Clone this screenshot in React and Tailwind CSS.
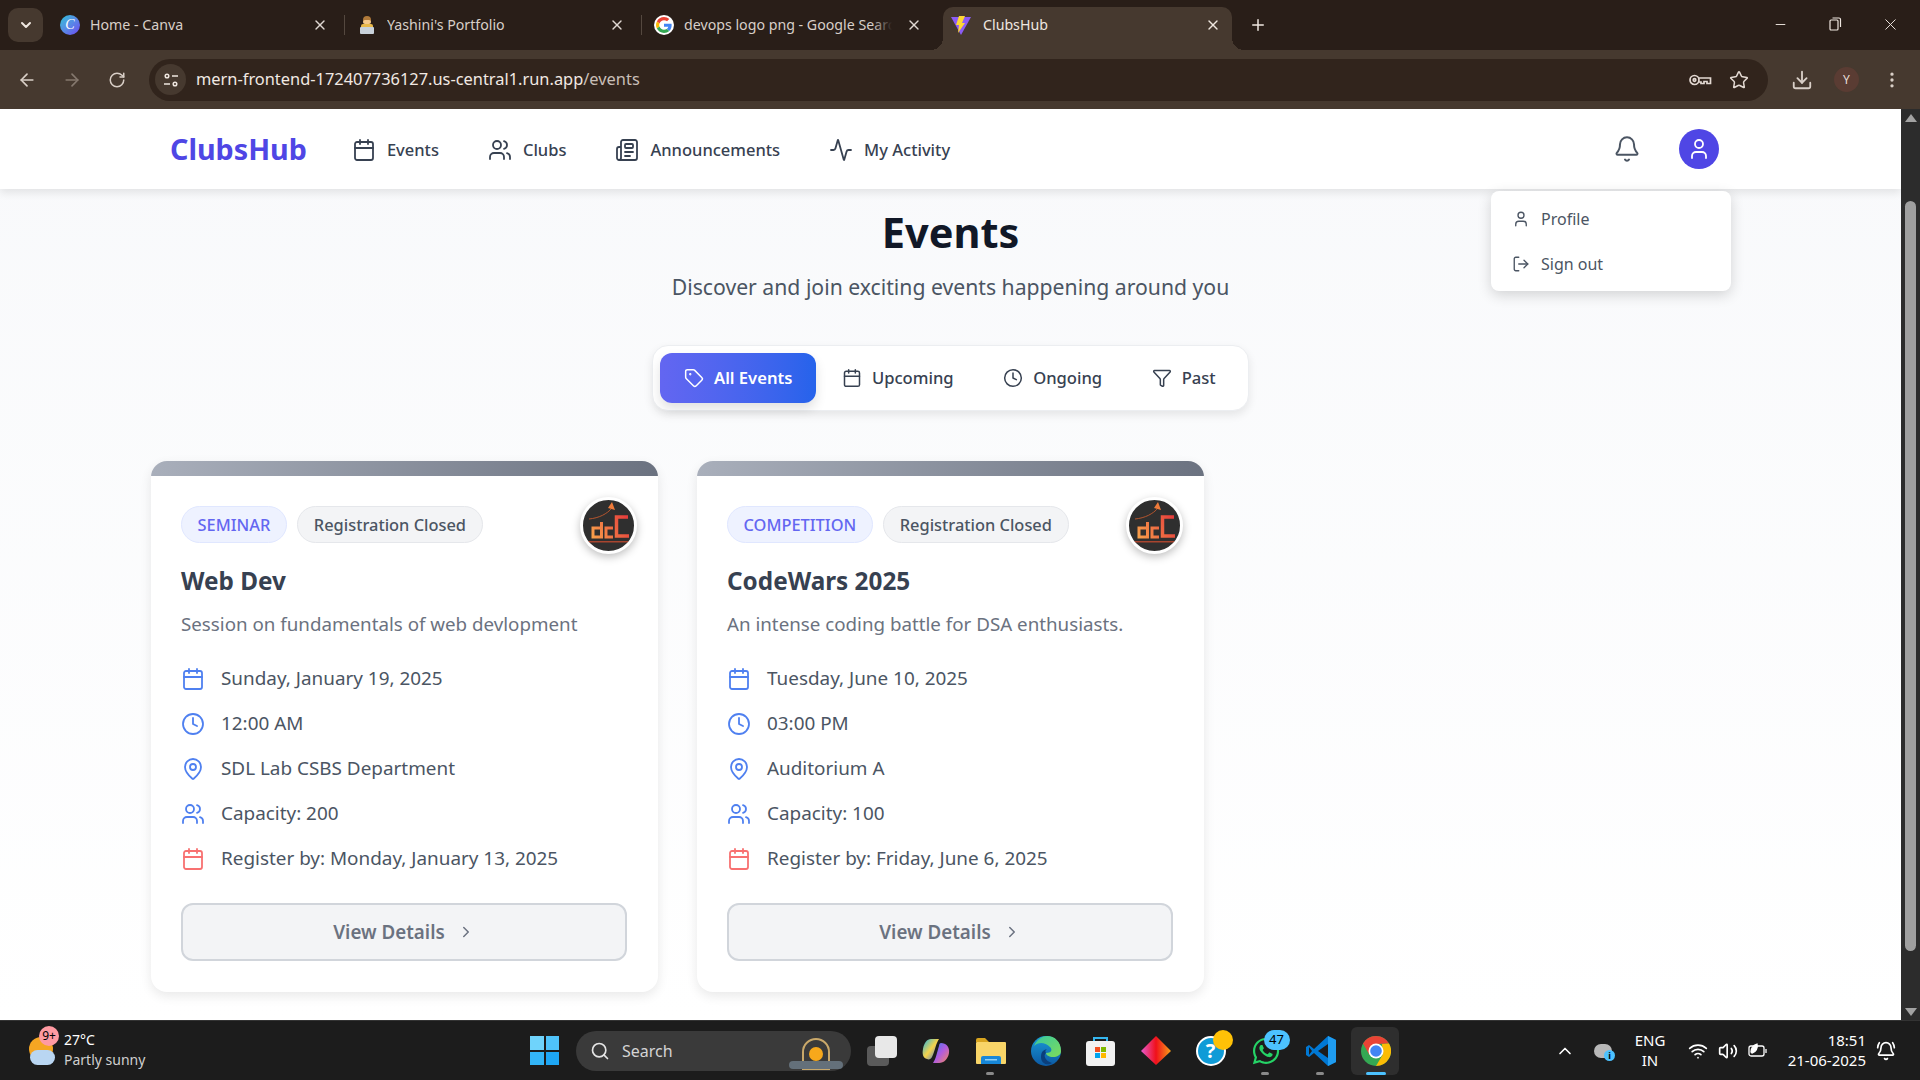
import React from "react";
import { Calendar, Users, Newspaper, Activity, Bell, User, LogOut, Tag, Clock, Filter, MapPin, ChevronRight, ArrowLeft, ArrowRight, RotateCw, Star, Download, MoreVertical, X, Plus, Minus, ChevronDown, ChevronUp, Search, Wifi, Volume2, BellRing } from "lucide-react";
import { FaWhatsapp } from "react-icons/fa";

function CanvaIcon() {
  return (
    <div className="w-5 h-5 rounded-full bg-gradient-to-br from-[#19c3d6] to-[#6a3df0] flex items-center justify-center text-white text-[14px] italic leading-none [font-family:'Liberation_Serif',serif]">C</div>
  );
}
function PersonIcon() {
  return (
    <svg width="20" height="20" viewBox="0 0 20 20">
      <circle cx="10" cy="5" r="4" fill="#b07a3a" />
      <rect x="6" y="5" width="8" height="4" rx="2" fill="#f5c98a" />
      <rect x="4" y="9" width="12" height="9" rx="2" fill="#e9b949" />
      <rect x="3" y="12" width="14" height="7" rx="1" fill="#c9d2da" />
    </svg>
  );
}
function GoogleIcon() {
  return (
    <div className="w-5 h-5 rounded-full bg-white flex items-center justify-center">
      <svg width="16" height="16" viewBox="0 0 48 48">
        <path fill="#EA4335" d="M24 9.5c3.5 0 6.7 1.3 9.1 3.5l6.8-6.8C35.8 2.4 30.3 0 24 0 14.6 0 6.5 5.4 2.6 13.2l7.9 6.1C12.4 13.7 17.7 9.5 24 9.5z" />
        <path fill="#4285F4" d="M46.9 24.5c0-1.6-.1-3.1-.4-4.5H24v9h12.9c-.6 3-2.2 5.500-4.800 7.200l7.700 6c4.500-4.200 7.100-10.300 7.100-17.700z" />
        <path fill="#FBBC05" d="M10.500 28.700c-.5-1.500-.8-3-.8-4.700s.3-3.200.8-4.700l-7.900-6.100C.9 16.500 0 20.100 0 24s.9 7.500 2.600 10.800l7.900-6.100z" />
        <path fill="#34A853" d="M24 48c6.500 0 11.900-2.100 15.800-5.800l-7.700-6c-2.100 1.400-4.900 2.300-8.100 2.300-6.300 0-11.600-4.200-13.500-9.800l-7.900 6.100C6.500 42.600 14.600 48 24 48z" />
      </svg>
    </div>
  );
}
function ViteIcon() {
  return (
    <svg width="20" height="20" viewBox="0 0 20 20">
      <path d="M0 2 L20 2 L10 20 Z" fill="#8b5cf6" />
      <path d="M8 1 L14 1 L11 8 L14 8 L7 18 L8 10 L5 10 Z" fill="#fdd835" />
    </svg>
  );
}

function Tab({ icon, title, sep, fade }) {
  return (
    <div className="w-[297px] h-[43px] pl-3 pb-[7px] flex items-center shrink-0">
      <div className="w-5 h-5 mr-[10px] shrink-0">{icon}</div>
      <div className="w-[214px] relative overflow-hidden whitespace-nowrap text-[14.2px] text-[#d8cfc8] leading-[22px]">
        {fade ? <span className="block w-[208px] overflow-hidden leading-[22px]">{title}</span> : title}
        {fade && <div className="absolute right-[6px] top-0 bottom-0 w-5 bg-gradient-to-r from-transparent to-[#291e18]" />}
      </div>
      <X size={16} className="ml-2 text-[#e0d8d2] shrink-0" />
      {sep && <div className="ml-auto w-px h-5 bg-[#54483f]" />}
    </div>
  );
}

function ActiveTab() {
  return (
    <div className="w-[297px] h-[43px] flex shrink-0 px-1">
      <div className="relative w-full h-full bg-[#46392f] rounded-t-[10px] pl-2 pb-[7px] flex items-center">
        <div className="w-5 h-5 mr-[12px] shrink-0"><ViteIcon /></div>
        <div className="w-[222px] text-[14.2px] text-[#efe7e0] leading-[22px]">ClubsHub</div>
        <X size={16} className="text-[#efe7e0] shrink-0" />
        <div className="absolute bottom-0 -right-3 w-3 h-3 bg-[radial-gradient(circle_at_100%_0,transparent_12px,#46392f_12px)]" />
        <div className="absolute bottom-0 -left-3 w-3 h-3 bg-[radial-gradient(circle_at_0_0,transparent_12px,#46392f_12px)]" />
      </div>
    </div>
  );
}

function TabStrip() {
  return (
    <div className="h-[50px] bg-[#291e18] flex items-end shrink-0 relative">
      <div className="absolute left-[8px] top-2 w-[35px] h-[34px] rounded-[10px] bg-[#46392f] flex items-center justify-center">
        <ChevronDown size={16} strokeWidth={3} className="text-[#efe7e0]" />
      </div>
      <div className="ml-[48px] flex">
        <Tab icon={<CanvaIcon />} title="Home - Canva" sep />
        <Tab icon={<PersonIcon />} title="Yashini's Portfolio" sep />
        <Tab icon={<GoogleIcon />} title="devops logo png - Google Search" fade />
        <ActiveTab />
      </div>
      <div className="ml-[13px] h-[43px] pb-[7px] flex items-center">
        <Plus size={18} className="text-[#efe7e0]" />
      </div>
      <div className="ml-auto h-full flex items-center pr-[20px] pb-[2px]">
        <Minus size={15} strokeWidth={1.5} className="text-[#efe7e0]" />
        <svg width="14" height="16" viewBox="0 0 14 16" className="ml-[40px] text-[#efe7e0]" fill="none" stroke="currentColor" strokeWidth="1.2">
          <rect x="2" y="4" width="8" height="10" rx="1" />
          <path d="M4.500 2 H11 a1.500 1.500 0 0 1 1.500 1.500 V11" />
        </svg>
        <X size={19} strokeWidth={1.2} className="ml-[39px] text-[#efe7e0]" />
      </div>
    </div>
  );
}

function Toolbar() {
  return (
    <div className="h-[59px] bg-[#46392f] flex items-center pl-[17px] shrink-0">
      <ArrowLeft size={20} className="text-[#d9cfc7]" />
      <ArrowRight size={20} className="ml-[25px] text-[#85786e]" />
      <RotateCw size={18} className="ml-[26px] text-[#d9cfc7]" />
      <div className="ml-[23px] w-[1619px] h-[42px] rounded-full bg-[#31241c] flex items-center pl-[6px] pr-[19px]">
        <div className="w-[31px] h-[31px] rounded-full bg-[#46392f] flex items-center justify-center">
          <svg width="16" height="16" viewBox="0 0 16 16" fill="none" stroke="#efe7e0" strokeWidth="1.500">
            <circle cx="4" cy="4" r="1.800" /><path d="M9 4 H15" />
            <circle cx="12" cy="12" r="1.800" /><path d="M1 12 H7" />
          </svg>
        </div>
        <div className="ml-[10px] text-[16.4px] leading-none whitespace-nowrap text-[#f1e9e3]">
          mern-frontend-172407736127.us-central1.run.app<span className="text-[#c9bfb7]">/events</span>
        </div>
        <svg width="24" height="16" viewBox="0 0 24 16" className="ml-auto" fill="none" stroke="#e3d9d2" strokeWidth="1.700">
          <circle cx="6.500" cy="8" r="4.500" /><circle cx="6.500" cy="8" r="1.300" /><path d="M11 6 H22.500 V11.500 H19 V9.500 H16 V11.500 H13 V10 H11" />
        </svg>
        <Star size={20} strokeWidth={1.800} className="ml-[17px] text-[#e3d9d2]" />
      </div>
      <Download size={22} className="ml-[23px] text-[#d9cfc7]" />
      <div className="ml-[21px] w-[25px] h-[25px] rounded-full bg-[#5a3c33] flex items-center justify-center text-[12px] text-[#e8ded8]">Y</div>
      <MoreVertical size={20} className="ml-[23px] text-[#d9cfc7]" />
    </div>
  );
}

function NavItem({ Icon, label }) {
  return (
    <div className="flex items-center gap-[11px] text-[#374151]">
      <Icon size={24} strokeWidth={1.800} />
      <span className="text-[16.5px] font-medium leading-none mt-[2px]">{label}</span>
    </div>
  );
}

function Navbar() {
  return (
    <div className="relative z-10 h-[80px] bg-white shadow-[0_4px_8px_rgba(0,0,0,0.09)] flex items-center pl-[170px] pr-[182px]">
      <div className="text-[28.7px] font-bold text-[#4f46e5] leading-none mt-[1px]">ClubsHub</div>
      <div className="ml-[45px] mt-[1px] flex items-center gap-[49px]">
        <NavItem Icon={Calendar} label="Events" />
        <NavItem Icon={Users} label="Clubs" />
        <NavItem Icon={Newspaper} label="Announcements" />
        <NavItem Icon={Activity} label="My Activity" />
      </div>
      <div className="ml-auto flex items-center gap-[38px]">
        <Bell size={28} strokeWidth={1.700} className="text-[#4b5563]" />
        <div className="w-10 h-10 rounded-full bg-[#4f46e5] flex items-center justify-center">
          <User size={24} strokeWidth={1.800} className="text-white" />
        </div>
      </div>
    </div>
  );
}

function Dropdown() {
  return (
    <div className="absolute z-20 left-[1491px] top-[82px] w-[240px] h-[100px] bg-white rounded-lg shadow-[0_4px_14px_rgba(0,0,0,0.16)] flex flex-col py-[5px] text-[#4b5563]">
      <div className="flex-1 flex items-center pl-[21px] gap-[11px]">
        <User size={18} strokeWidth={1.800} />
        <span className="text-[16px] leading-none">Profile</span>
      </div>
      <div className="flex-1 flex items-center pl-[21px] gap-[11px]">
        <LogOut size={18} strokeWidth={1.800} />
        <span className="text-[16px] leading-none">Sign out</span>
      </div>
    </div>
  );
}

function FilterTab({ Icon, label, active }) {
  return (
    <div className={(active ? "bg-gradient-to-r from-[#6366f1] to-[#2563eb] text-white shadow-[0_6px_12px_rgba(0,0,0,0.12)] font-semibold " : "text-[#374151] font-medium ") + "h-[50px] px-6 rounded-xl flex items-center gap-[10px]"}>
      <Icon size={20} strokeWidth={1.800} />
      <span className="text-[16.6px] leading-none">{label}</span>
    </div>
  );
}

function ClubLogo({ id }) {
  return (
    <div className="absolute right-[21px] top-[36px] w-[57px] h-[57px] rounded-full border-[3px] border-white shadow-[0_3px_8px_rgba(0,0,0,0.25)] bg-[#2f2f2f] overflow-hidden">
      <svg width="51" height="51" viewBox="0 0 51 51" fill="none">
        <defs>
          <linearGradient id={id} gradientUnits="userSpaceOnUse" x1="8" y1="36" x2="46" y2="16">
            <stop offset="0" stopColor="#f8a14a" />
            <stop offset="1" stopColor="#e5383b" />
          </linearGradient>
        </defs>
        <path d="M6 19 C16 18 24 14 29 8" stroke="#b4552e" strokeWidth="1" />
        <path d="M25 8 L29 2 L32 10 Z" fill="#ef7b3a" />
        <path d="M18.500 22 V37 H10 V28 H18" stroke={`url(#${id})`} strokeWidth="3" />
        <path d="M30 28 H23 V37 H30" stroke={`url(#${id})`} strokeWidth="3" />
        <path d="M45 17 H33.500 V36 H46" stroke={`url(#${id})`} strokeWidth="3.500" />
        <rect x="3" y="41" width="45" height="1.500" fill="#a8452f" />
      </svg>
    </div>
  );
}

function Row({ Icon, text, red }) {
  return (
    <div className="h-[45px] flex items-center gap-[16px]">
      <Icon size={24} strokeWidth={1.800} className={red ? "text-[#f87171] shrink-0" : "text-[#4f80f0] shrink-0"} />
      <span className="text-[18.9px] text-[#4b5563] leading-none">{text}</span>
    </div>
  );
}

function EventCard({ id, kind, title, desc, date, time, place, capacity, deadline }) {
  return (
    <div className="relative w-[507px] h-[531px] bg-white rounded-2xl overflow-hidden shadow-[0_4px_12px_rgba(0,0,0,0.09)] shrink-0">
      <div className="h-[15px] bg-gradient-to-r from-[#a9afbb] to-[#6b7280]" />
      <ClubLogo id={id} />
      <div className="px-[30px] pt-[30px]">
        <div className="flex gap-[10px]">
          <div className="h-[37px] px-[15.5px] rounded-full bg-[#eef2ff] border border-[#e0e7ff] flex items-center text-[16.4px] font-medium text-[#6366f1] leading-none pt-[2px]">{kind}</div>
          <div className="h-[37px] px-[16px] rounded-full bg-[#f3f4f6] border border-[#e5e7eb] flex items-center text-[16.4px] font-medium text-[#4b5563] leading-none pt-[2px]">Registration Closed</div>
        </div>
        <div className="mt-[22px] text-[24.3px] font-bold text-[#374151] leading-[32px]">{title}</div>
        <div className="mt-[13px] text-[18.75px] text-[#6b7280] leading-[28px]">{desc}</div>
        <div className="mt-[18px]">
          <Row Icon={Calendar} text={date} />
          <Row Icon={Clock} text={time} />
          <Row Icon={MapPin} text={place} />
          <Row Icon={Users} text={capacity} />
          <Row Icon={Calendar} text={deadline} red />
        </div>
        <div className="mt-[22px] w-[446px] h-[58px] rounded-xl border-2 border-[#d1d5db] bg-[#f3f4f6] flex items-center justify-center gap-[12px] text-[#6b7280]">
          <span className="text-[18.8px] font-semibold leading-none">View Details</span>
          <ChevronRight size={18} />
        </div>
      </div>
    </div>
  );
}

function Page() {
  return (
    <div className="relative flex-1 min-w-0 overflow-hidden bg-gradient-to-b from-[#f8f9fb] to-white">
      <Navbar />
      <Dropdown />
      <div className="flex flex-col items-center pt-[15px]">
        <h1 className="text-[41.5px] font-bold text-[#111827] leading-[56px]">Events</h1>
        <p className="mt-[13px] text-[21.2px] text-[#4b5563] leading-[28px]">Discover and join exciting events happening around you</p>
        <div className="mt-[44px] w-[597px] h-[66px] bg-white rounded-2xl border border-[#eceef1] shadow-[0_4px_10px_rgba(0,0,0,0.09)] flex items-center pl-[7px] gap-[1.5px]">
          <FilterTab Icon={Tag} label="All Events" active />
          <FilterTab Icon={Calendar} label="Upcoming" />
          <FilterTab Icon={Clock} label="Ongoing" />
          <FilterTab Icon={Filter} label="Past" />
        </div>
      </div>
      <div className="mt-[50px] ml-[151px] flex gap-[39px]">
        <EventCard id="logo-a" kind="SEMINAR" title="Web Dev" desc="Session on fundamentals of web devlopment" date="Sunday, January 19, 2025" time="12:00 AM" place="SDL Lab CSBS Department" capacity="Capacity: 200" deadline="Register by: Monday, January 13, 2025" />
        <EventCard id="logo-b" kind="COMPETITION" title="CodeWars 2025" desc="An intense coding battle for DSA enthusiasts." date="Tuesday, June 10, 2025" time="03:00 PM" place="Auditorium A" capacity="Capacity: 100" deadline="Register by: Friday, June 6, 2025" />
      </div>
    </div>
  );
}

function Scrollbar() {
  return (
    <div className="w-[19px] shrink-0 bg-[#2c2c2c] flex flex-col items-center pt-[5px] pb-[4px]">
      <div className="w-0 h-0 border-l-[6px] border-r-[6px] border-b-[8px] border-l-transparent border-r-transparent border-b-[#a3a3a3]" />
      <div className="mt-[79px] w-[11px] h-[750px] rounded-full bg-[#9f9f9f]" />
      <div className="mt-auto w-0 h-0 border-l-[6px] border-r-[6px] border-t-[8px] border-l-transparent border-r-transparent border-t-[#a3a3a3]" />
    </div>
  );
}

function WindowsLogo() {
  return (
    <div className="grid grid-cols-2 gap-[2px] w-[29px] h-[29px] shrink-0">
      <div className="bg-[#6fd3fb]" />
      <div className="bg-[#4fc3fa]" />
      <div className="bg-[#33b5f7]" />
      <div className="bg-[#1ea7f5]" />
    </div>
  );
}

const Copilot = () => (
  <svg width="28" height="28" viewBox="0 0 28 28">
    <defs>
      <linearGradient id="c1" x1="0" y1="0" x2="1" y2="1"><stop offset="0" stopColor="#1fb6e8" /><stop offset="0.500" stopColor="#f6d34a" /><stop offset="1" stopColor="#2f6fe8" /></linearGradient>
      <linearGradient id="c2" x1="0" y1="0" x2="1" y2="1"><stop offset="0" stopColor="#3a7cf0" /><stop offset="0.500" stopColor="#b05be0" /><stop offset="1" stopColor="#f58a5a" /></linearGradient>
    </defs>
    <path d="M9 2 H17 C14 6 13 14 10 20 C9 22 7 23 5 22 C1 21 0 17 1 12 C2 6 5 2 9 2 Z" fill="url(#c1)" />
    <path d="M19 6 C24 6 28 10 27 16 C26 22 22 26 17 26 H11 C14 22 15 15 17 9 C17 7 18 6 19 6 Z" fill="url(#c2)" />
  </svg>
);
const Folder = () => (
  <svg width="30" height="28" viewBox="0 0 30 28">
    <path d="M0 3 a2 2 0 0 1 2-2 H9 l4 4 H0 Z" fill="#d9a51f" />
    <rect x="0" y="5" width="30" height="22" rx="1" fill="#f8d568" />
    <path d="M5 27 V21 a2 2 0 0 1 2-2 H23 a2 2 0 0 1 2 2 V27 Z" fill="#1787d8" />
    <rect x="9" y="22" width="12" height="1.500" fill="#8fd0f5" />
  </svg>
);
const Edge = () => (
  <svg width="30" height="30" viewBox="0 0 30 30">
    <defs>
      <linearGradient id="e1" x1="0" y1="0" x2="1" y2="1"><stop offset="0" stopColor="#36c9a0" /><stop offset="1" stopColor="#7fdc5a" /></linearGradient>
      <linearGradient id="e2" x1="0" y1="0" x2="0" y2="1"><stop offset="0" stopColor="#1a9ad6" /><stop offset="1" stopColor="#0c59a4" /></linearGradient>
    </defs>
    <circle cx="15" cy="15" r="15" fill="url(#e2)" />
    <path d="M3 10 C6 3 12 0 16 0 C24 0 30 6 30 15 C30 19 26 21 22 21 C18 21 15 19 15 17 C20 17 22 14 19 11 C14 6 7 6 3 10 Z" fill="url(#e1)" />
    <path d="M15 17 C12 19 14 25 21 27 C17 30 10 28 10 21 C10 16 12 14 16 13 C14 14 14 16 15 17 Z" fill="#0b3f7c" />
  </svg>
);
const Store = () => (
  <svg width="29" height="30" viewBox="0 0 29 30">
    <path d="M8 6 V2 H21 V6" fill="none" stroke="#35b6ef" strokeWidth="2" />
    <rect x="0" y="5" width="29" height="25" rx="3" fill="#f2f2f2" />
    <rect x="9" y="11" width="5" height="5" fill="#f25022" />
    <rect x="15" y="11" width="5" height="5" fill="#7fba00" />
    <rect x="9" y="17" width="5" height="5" fill="#00a4ef" />
    <rect x="15" y="17" width="5" height="5" fill="#ffb900" />
  </svg>
);
const Diamond = () => (
  <svg width="30" height="30" viewBox="0 0 30 30">
    <defs>
      <linearGradient id="d1" x1="0" y1="0" x2="1" y2="0"><stop offset="0" stopColor="#e65bd0" /><stop offset="0.500" stopColor="#f0101a" /><stop offset="1" stopColor="#f9a01a" /></linearGradient>
    </defs>
    <path d="M15 0 L30 15 L15 29 L0 15 Z" fill="url(#d1)" />
  </svg>
);
const Help = () => (
  <div className="relative w-[30px] h-[30px]">
    <div className="w-[30px] h-[30px] rounded-full bg-[#0f9bd7] border-2 border-white flex items-center justify-center text-white text-[20px] font-bold leading-none">?</div>
    <div className="absolute -top-[6px] -right-[7px] w-5 h-5 rounded-full bg-[#ffc107]" />
  </div>
);
const Whatsapp = () => (
  <div className="relative w-[30px] h-[30px]">
    <FaWhatsapp size={30} className="text-[#25d366]" />
    <div className="absolute -top-[6px] -right-[9px] w-[26px] h-5 rounded-full bg-[#4cc2ff] flex items-center justify-center text-[13px] text-black leading-none">47</div>
  </div>
);
const VSCode = () => (
  <svg width="30" height="30" viewBox="0 0 30 30">
    <path d="M22 0 L30 4 V26 L22 30 L8 17 L3 21 L0 19 V11 L3 9 L8 13 Z" fill="#0078d4" />
    <path d="M22 0 L30 4 V26 L22 30 Z" fill="#1f9cf0" />
    <path d="M22 8 L12 15 L22 22 Z" fill="#1c1c1c" />
    <path d="M3 11 L6 15 L3 19 Z" fill="#1c1c1c" />
  </svg>
);
const Chrome = () => (
  <svg width="30" height="30" viewBox="0 0 30 30">
    <circle cx="15" cy="15" r="15" fill="#34a853" />
    <path d="M15 0 A15 15 0 0 1 28 7.500 L15 8 L8.500 19 L2 7.500 A15 15 0 0 1 15 0 Z" fill="#ea4335" />
    <path d="M28 7.500 A15 15 0 0 1 15 30 L21.500 19 L21 8 Z" fill="#fbbc05" />
    <circle cx="15" cy="15" r="7.500" fill="#fff" />
    <circle cx="15" cy="15" r="5.800" fill="#4285f4" />
  </svg>
);

function Slot({ children, dot, active }) {
  return (
    <div className="relative w-[55px] h-[48px] flex items-center justify-center shrink-0">
      {active && <div className="absolute left-[3px] right-[4px] top-0 bottom-0 rounded-md bg-[#2e2e2e]" />}
      <div className="relative">{children}</div>
      {dot && <div className="absolute bottom-0 left-[23px] w-2 h-[3px] rounded-full bg-[#8a8a8a]" />}
      {active && <div className="absolute bottom-0 left-[18px] w-5 h-[3px] rounded-full bg-[#4cc2ff]" />}
    </div>
  );
}

function Taskbar() {
  return (
    <div className="h-[60px] shrink-0 bg-[#1c1c1c] border-t border-[#333333] flex items-center text-white">
      <div className="w-[530px] pl-[29px] flex items-center shrink-0">
        <div className="relative w-[26px] h-[28px]">
          <div className="absolute left-0 top-0 w-[24px] h-[24px] rounded-full bg-[#f5a623]" />
          <div className="absolute left-[1px] bottom-0 w-[25px] h-[15px] rounded-full bg-[#b9d6f2]" />
          <div className="absolute -top-[11px] left-[10px] w-[20px] h-[20px] rounded-full bg-[#ff9aa2] flex items-center justify-center text-[12px] text-black leading-none">9+</div>
        </div>
        <div className="ml-[9px] flex flex-col gap-[3px] mb-[2px]">
          <span className="text-[14px] leading-[17px]">27°C</span>
          <span className="text-[14px] leading-[17px] text-[#cfcfcf]">Partly sunny</span>
        </div>
      </div>
      <WindowsLogo />
      <div className="ml-[17px] w-[275px] h-[40px] rounded-full bg-[#3a3a3a] flex items-center pl-[14px] shrink-0">
        <Search size={20} className="text-[#e5e5e5]" />
        <span className="ml-[12px] text-[16px] text-[#d4d4d4] leading-none">Search</span>
        <div className="ml-auto mr-[8px] relative w-[54px] h-[38px] flex flex-col items-center justify-end">
          <div className="w-[28px] h-[32px] rounded-t-full border-2 border-[#c9a86a] flex items-center justify-center">
            <div className="w-[14px] h-[14px] rounded-full bg-[#f7a81b]" />
          </div>
          <div className="absolute bottom-[1px] w-[54px] h-[8px] rounded-full bg-[#64707a]" />
        </div>
      </div>
      <div className="ml-[16px] relative w-[30px] h-[30px] shrink-0">
        <div className="absolute left-0 bottom-0 w-[22px] h-[20px] rounded-sm bg-[#5a5a5a]" />
        <div className="absolute right-0 top-0 w-[22px] h-[22px] rounded-sm bg-[#e8e8e8]" />
      </div>
      <div className="ml-[11px] flex items-center">
        <Slot><Copilot /></Slot>
        <Slot dot><Folder /></Slot>
        <Slot><Edge /></Slot>
        <Slot><Store /></Slot>
        <Slot><Diamond /></Slot>
        <Slot><Help /></Slot>
        <Slot dot><Whatsapp /></Slot>
        <Slot dot><VSCode /></Slot>
        <Slot active><Chrome /></Slot>
      </div>
      <div className="ml-auto flex items-center pr-[14px]">
        <div className="w-[26px] flex justify-center"><ChevronUp size={20} className="text-white" /></div>
        <div className="w-[50px] flex justify-center">
          <div className="relative w-[18px] h-[14px]">
            <div className="absolute inset-0 rounded-full bg-[#b8b8b8]" />
            <div className="absolute -right-[3px] -bottom-[3px] w-[11px] h-[11px] rounded-full bg-[#4cc2ff] flex items-center justify-center text-[9px] font-bold text-black leading-none">i</div>
          </div>
        </div>
        <div className="w-[44px] flex flex-col items-center text-[15px] leading-[20px] mb-[2px]">
          <span>ENG</span><span>IN</span>
        </div>
        <Wifi size={20} className="ml-[16px] mr-[5px]" />
        <Volume2 size={20} className="mx-[5px]" />
        <svg width="20" height="16" viewBox="0 0 20 16" className="mx-[5px]" fill="none" stroke="#fff" strokeWidth="1.300">
          <rect x="1" y="3" width="15" height="10" rx="2" /><path d="M18 6 V10" />
          <path d="M3 9 C3 5 6 2 9 1 C10 5 8 9 4 10 Z" fill="#fff" />
        </svg>
        <div className="w-[93px] flex flex-col items-end text-[15px] leading-[20px] mb-[2px]">
          <span>18:51</span><span>21-06-2025</span>
        </div>
        <div className="w-[40px] flex justify-center"><BellRing size={20} /></div>
      </div>
    </div>
  );
}

export default function App() {
  return (
    <div className="h-screen w-screen overflow-hidden flex flex-col [font-family:'Noto_Sans',sans-serif]">
      <TabStrip />
      <Toolbar />
      <div className="flex flex-1 min-h-0">
        <Page />
        <Scrollbar />
      </div>
      <Taskbar />
    </div>
  );
}
